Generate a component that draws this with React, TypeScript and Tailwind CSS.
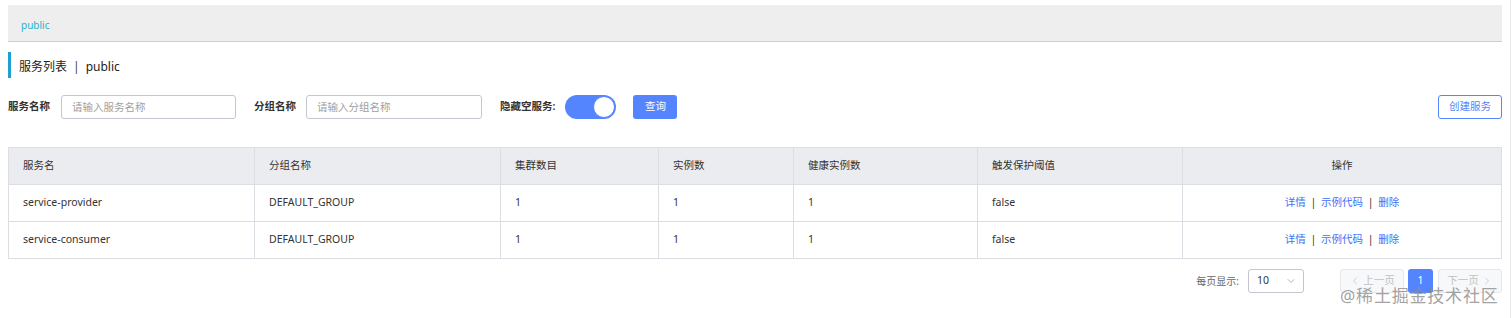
import { ChevronDown, ChevronLeft, ChevronRight } from 'lucide-react';

const rows = [
  { name: 'service-provider', group: 'DEFAULT_GROUP', clusters: 1, instances: 1, healthy: 1, threshold: 'false' },
  { name: 'service-consumer', group: 'DEFAULT_GROUP', clusters: 1, instances: 1, healthy: 1, threshold: 'false' },
];

const cols = ['w-[246px]', 'w-[246px]', 'w-[158px]', 'w-[135px]', 'w-[184px]', 'w-[205px]'];

export default function App() {
  return (
    <div className="relative w-[1512px] h-[318px] bg-white text-[10.5px] text-[#333] font-['Noto_Sans','Noto_Sans_CJK_SC',sans-serif] overflow-hidden">
      {/* right edge line */}
      <div className="absolute right-[1px] top-0 h-full w-px bg-[#e6e6e6]" />

      <div className="pl-2 pr-[10px] pt-[5px]">
        {/* breadcrumb bar */}
        <div className="h-[37px] bg-[#eeeeee] border-b border-[#cfcfcf] flex items-center pl-[13px] pt-[4px]">
          <span className="text-[#1fb2cc] text-[10px]">public</span>
        </div>

        {/* page title */}
        <div className="mt-[10px] h-[26px] border-l-[3px] border-[#1f9fd3] flex items-center pl-[8px] pt-[4px] text-[12px] text-[#222]">
          服务列表 <span className="mx-[6px] text-[#444]">|</span> public
        </div>

        {/* filters */}
        <div className="mt-[17px] h-[24px] flex items-center">
          <span className="font-semibold text-[#333]">服务名称</span>
          <input
            className="ml-[11px] w-[175px] h-[24px] border border-[#c4c6cf] rounded-[3px] px-[10px] text-[10.5px] placeholder:text-[#a0a0a0] outline-none"
            placeholder="请输入服务名称"
          />
          <span className="ml-[18px] font-semibold text-[#333]">分组名称</span>
          <input
            className="ml-[10px] w-[176px] h-[24px] border border-[#c4c6cf] rounded-[3px] px-[10px] text-[10.5px] placeholder:text-[#a0a0a0] outline-none"
            placeholder="请输入分组名称"
          />
          <span className="ml-[18px] text-[#333] font-semibold">隐藏空服务:</span>
          <div className="ml-[10px] w-[51px] h-[24px] rounded-full bg-[#5584ff] flex items-center justify-end pr-[1px]">
            <div className="w-[22px] h-[22px] rounded-full bg-white border border-[#5584ff]" />
          </div>
          <button className="ml-[17px] w-[44px] h-[24px] rounded-[3px] bg-[#5584ff] text-white text-[10.5px]">查询</button>
          <button className="ml-auto w-[64px] h-[24px] rounded-[3px] border border-[#5584ff] bg-white text-[#5584ff] text-[10.5px]">
            创建服务
          </button>
        </div>

        {/* table */}
        <table className="mt-[28px] w-[1494px] border-collapse border border-[#dcdee3] table-fixed">
          <thead>
            <tr className="h-[37px] bg-[#ebecf0]">
              {['服务名', '分组名称', '集群数目', '实例数', '健康实例数', '触发保护阈值'].map((h, i) => (
                <th key={h} className={`${cols[i]} border-r border-[#dcdee3] text-left font-normal pl-[14px] text-[#333]`}>
                  {h}
                </th>
              ))}
              <th className="font-normal text-center text-[#333]">操作</th>
            </tr>
          </thead>
          <tbody>
            {rows.map((r) => (
              <tr key={r.name} className="h-[37px] border-t border-[#dcdee3]">
                <td className="border-r border-[#dcdee3] pl-[14px]">{r.name}</td>
                <td className="border-r border-[#dcdee3] pl-[14px]">{r.group}</td>
                <td className="border-r border-[#dcdee3] pl-[14px]">{r.clusters}</td>
                <td className="border-r border-[#dcdee3] pl-[14px]">{r.instances}</td>
                <td className="border-r border-[#dcdee3] pl-[14px]">{r.healthy}</td>
                <td className="border-r border-[#dcdee3] pl-[14px]">{r.threshold}</td>
                <td className="text-center text-[#3e71f7]">
                  详情 <span className="text-[#333] mx-[2px]">|</span> 示例代码 <span className="text-[#333] mx-[2px]">|</span> 删除
                </td>
              </tr>
            ))}
          </tbody>
        </table>

        {/* pagination */}
        <div className="mt-[10px] flex items-center justify-end h-[24px]">
          <span className="text-[10px] text-[#666]">每页显示:</span>
          <div className="ml-[9px] w-[56px] h-[24px] border border-[#c4c6cf] rounded-[3px] flex items-center justify-between pl-[8px] pr-[6px]">
            <span>10</span>
            <ChevronDown className="w-[12px] h-[12px] text-[#999]" strokeWidth={1.5} />
          </div>
          <button className="ml-[36px] w-[64px] h-[24px] border border-[#e6e7eb] rounded-[3px] bg-[#f7f8fa] text-[#c1c1c1] flex items-center justify-center gap-[2px]">
            <ChevronLeft className="w-[12px] h-[12px]" strokeWidth={1.5} />
            上一页
          </button>
          <button className="ml-[4px] w-[25px] h-[24px] rounded-[3px] bg-[#5584ff] text-white">1</button>
          <button className="ml-[5px] w-[64px] h-[24px] border border-[#e6e7eb] rounded-[3px] bg-[#f7f8fa] text-[#c1c1c1] flex items-center justify-center gap-[2px]">
            下一页
            <ChevronRight className="w-[12px] h-[12px]" strokeWidth={1.5} />
          </button>
        </div>
      </div>

      {/* watermark */}
      <div className="absolute left-[1340px] top-[283px] text-[17px] text-[#8a8a8a]/80 tracking-[0.8px]">@稀土掘金技术社区</div>
    </div>
  );
}
